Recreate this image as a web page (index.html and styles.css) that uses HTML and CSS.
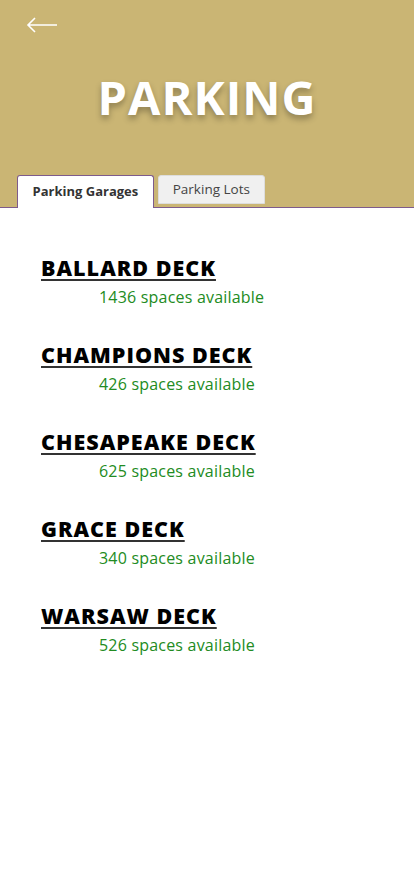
FILE: index.html
```html
<!DOCTYPE html>
<html>
<head>
<meta charset="utf-8">
<link rel="stylesheet" href="styles.css">
</head>
<body>
<header class="hero">
  <div class="back">
    <svg width="32" height="16" viewBox="0 0 32 16"><path d="M31 8H2M9 1L2 8l7 7" fill="none" stroke="#fff" stroke-width="1.6"/></svg>
  </div>
  <h1 class="title">PARKING</h1>
  <nav class="tabs">
    <div class="tab active">Parking Garages</div>
    <div class="tab">Parking Lots</div>
  </nav>
</header>
<main class="list">
  <div class="item"><h2 class="name">BALLARD DECK</h2><p class="avail">1436 spaces available</p></div>
  <div class="item"><h2 class="name">CHAMPIONS DECK</h2><p class="avail">426 spaces available</p></div>
  <div class="item"><h2 class="name">CHESAPEAKE DECK</h2><p class="avail">625 spaces available</p></div>
  <div class="item"><h2 class="name">GRACE DECK</h2><p class="avail">340 spaces available</p></div>
  <div class="item"><h2 class="name">WARSAW DECK</h2><p class="avail">526 spaces available</p></div>
</main>
</body>
</html>
```
FILE: styles.css
```css
* { box-sizing: border-box; }
body { margin: 0; font-family: "Open Sans", sans-serif; background: #fff; }
.hero { background: #cab574; height: 208px; border-bottom: 1px solid #7d5b8c; display: flex; flex-direction: column; }
.back { padding: 17px 0 0 26px; height: 40px; }
.back svg { display: block; }
.title { margin: 28px 0 0 0; text-align: center; color: #fff; font-weight: 700; font-size: 47px; line-height: 58px; letter-spacing: 1px; text-shadow: 0 4px 6px rgba(0,0,0,0.3); }
.tabs { margin-top: auto; display: flex; gap: 4px; padding-left: 17px; align-items: flex-start; }
.tab { font-size: 13.5px; color: #444; background: #f0f0f0; border: 1px solid #ddd; border-radius: 3px 3px 0 0; padding: 0 14px; height: 29px; line-height: 27px; }
.tab.active { background: #fff; border-color: #7d5b8c; border-bottom: none; font-size: 13px; font-weight: 700; color: #333; height: 33px; line-height: 30px; margin-bottom: -1px; padding: 0 14.5px; }
.list { padding: 47px 0 0 41px; display: flex; flex-direction: column; gap: 34px; }
.item { display: flex; flex-direction: column; }
.name { margin: 0; font-weight: 800; font-size: 21.5px; line-height: 26px; letter-spacing: 1px; color: #000; text-decoration: underline; text-decoration-thickness: 2px; text-underline-offset: 3px; text-decoration-color: #333; align-self: flex-start; }
.avail { margin: 5px 0 0 58px; font-size: 16px; line-height: 22px; letter-spacing: 0.2px; color: #228b22; }
```
